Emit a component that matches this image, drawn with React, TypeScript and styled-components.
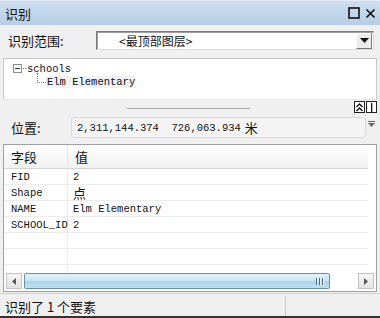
import React from "react";
import styled, { createGlobalStyle } from "styled-components";

const Global = createGlobalStyle`
  html, body { margin: 0; padding: 0; background: #f0f0f0; }
  body { font-family: "Noto Sans CJK SC", "Liberation Sans", sans-serif; }
  * { box-sizing: border-box; }
`;

const CJK = `"Noto Sans CJK SC", "Liberation Sans", sans-serif`;
const MONO = `"Liberation Mono", "Noto Sans CJK SC", monospace`;

const Window = styled.div`
  width: 380px;
  height: 318px;
  background: #f0f0f0;
  border-bottom: 2px solid #333;
  display: flex;
  flex-direction: column;
  overflow: hidden;
`;

const TitleBar = styled.div`
  height: 25px;
  flex: none;
  background: linear-gradient(#cfdff0, #b6cde6);
  border-top: 1px solid #e4edf7;
  display: flex;
  align-items: center;
  padding: 0 3px 0 5px;
  font-family: ${CJK};
  font-size: 13px;
  color: #111;
`;

const Title = styled.span`
  flex: 1;
`;

const TitleBtn = styled.span`
  width: 13px;
  height: 14px;
  display: inline-flex;
  align-items: center;
  justify-content: center;
  margin-left: 4px;
`;

const ScopeRow = styled.div`
  height: 31px;
  flex: none;
  display: flex;
  align-items: center;
  padding: 0 6px 0 8px;
`;

const Label = styled.span<{ $w?: number }>`
  font-family: ${CJK};
  font-size: 13px;
  color: #111;
  width: ${(p) => p.$w ?? 88}px;
  flex: none;
`;

const Select = styled.div`
  flex: 1;
  height: 19px;
  background: #fff;
  border: 1px solid #7a7a7a;
  border-right-color: #dcdcdc;
  border-bottom-color: #dcdcdc;
  box-shadow: inset 1px 1px 0 #a0a0a0;
  display: flex;
  align-items: center;
  font-family: ${CJK};
  font-size: 12px;
  color: #111;
`;

const SelectText = styled.span`
  flex: 1;
  padding-left: 22px;
`;

const SelectBtn = styled.span`
  width: 16px;
  height: 16px;
  margin-right: 1px;
  background: #ececec;
  border: 1px solid #fff;
  border-right-color: #777;
  border-bottom-color: #777;
  display: flex;
  align-items: center;
  justify-content: center;
`;

const TreePanel = styled.div`
  height: 42px;
  flex: none;
  margin: 2px 3px 0 3px;
  background: #fff;
  border: 1px solid #c8c8c8;
  border-bottom-color: #e8e8e8;
  padding: 3px 0 0 9px;
  font-family: ${MONO};
  font-size: 10.5px;
  color: #111;
`;

const TreeRow = styled.div<{ $indent?: number }>`
  height: 13px;
  display: flex;
  align-items: center;
  padding-left: ${(p) => p.$indent ?? 0}px;
`;

const Expander = styled.span`
  width: 9px;
  height: 9px;
  border: 1px solid #8c8c8c;
  display: inline-flex;
  align-items: center;
  justify-content: center;
  margin-right: 1px;
  &::after {
    content: "";
    width: 5px;
    height: 1px;
    background: #333;
  }
`;

const DotH = styled.span<{ $w: number }>`
  width: ${(p) => p.$w}px;
  border-top: 1px dotted #777;
  margin-right: 1px;
`;

const Elbow = styled.span`
  width: 9px;
  height: 10px;
  border-left: 1px dotted #777;
  border-bottom: 1px dotted #777;
  margin-top: -8px;
`;

const Selected = styled.span`
  background: #f2f2f2;
  padding: 0 1px;
`;

const SplitBar = styled.div`
  height: 14px;
  flex: none;
  display: flex;
  align-items: center;
  padding: 0 3px 0 127px;
`;

const SplitLine = styled.span`
  width: 123px;
  height: 1px;
  background: #a8a8a8;
  margin-top: 3px;
`;

const Spacer = styled.span`
  flex: 1;
`;

const SmallBtn = styled.span`
  width: 11px;
  height: 12px;
  border: 1px solid #222;
  background: #fff;
  display: inline-flex;
  align-items: center;
  justify-content: center;
  margin-left: 1px;
`;

const LocRow = styled.div`
  height: 27px;
  flex: none;
  display: flex;
  align-items: center;
  padding: 0 4px 0 11px;
`;

const LocField = styled.div`
  flex: 1;
  height: 21px;
  background: #f4f4f4;
  border: 1px solid #d8d8d8;
  border-radius: 3px;
  display: flex;
  align-items: center;
  padding-left: 5px;
  font-family: ${MONO};
  font-size: 10.5px;
  color: #111;
  white-space: pre;
`;

const Unit = styled.span`
  font-family: ${CJK};
  font-size: 13px;
  margin-left: 4px;
`;

const LocArrow = styled.span`
  width: 8px;
  margin-left: 2px;
  display: flex;
  align-self: flex-start;
  margin-top: 7px;
`;

const TablePanel = styled.div`
  flex: 1;
  min-height: 0;
  margin: 3px 3px 0 3px;
  background: #fff;
  border: 1px solid #a0a0a0;
  display: flex;
  flex-direction: column;
  overflow: hidden;
`;

const Grid = styled.div`
  flex: 1;
  min-height: 0;
  overflow: hidden;
  display: grid;
  grid-template-columns: 64px 1fr;
  grid-template-rows: 24px;
  grid-auto-rows: 16px;
  align-content: start;
  margin-right: 8px;
`;

const HeadCell = styled.div<{ $last?: boolean }>`
  height: 24px;
  background: linear-gradient(#ffffff, #f1f1f1);
  border-bottom: 1px solid #d5d5d5;
  border-right: ${(p) => (p.$last ? "none" : "1px solid #e4e4e4")};
  display: flex;
  align-items: center;
  padding-left: 7px;
  font-family: ${CJK};
  font-size: 13px;
  color: #111;
`;

const Cell = styled.div<{ $first?: boolean }>`
  height: 16px;
  border-bottom: 1px solid #ececec;
  border-right: ${(p) => (p.$first ? "1px solid #ececec" : "none")};
  display: flex;
  align-items: center;
  padding-left: ${(p) => (p.$first ? 7 : 5)}px;
  font-family: ${MONO};
  font-size: 10.5px;
  color: #111;
  white-space: nowrap;
`;

const CjkText = styled.span`
  font-family: ${CJK};
  font-size: 13px;
`;

const HScroll = styled.div`
  height: 16px;
  flex: none;
  margin: 0 2px 2px 2px;
  display: flex;
  align-items: center;
  gap: 2px;
`;

const ScrollBtn = styled.span`
  width: 16px;
  height: 16px;
  border: 1px solid #c4c4c4;
  background: linear-gradient(#f7f7f7, #e2e2e2);
  display: flex;
  align-items: center;
  justify-content: center;
`;

const Track = styled.div`
  flex: 1;
  height: 16px;
  display: flex;
  padding-right: 26px;
`;

const Thumb = styled.div`
  flex: 1;
  height: 16px;
  border: 1px solid #6a8ea8;
  border-radius: 2px;
  background: linear-gradient(#dff1f9 0%, #c7e6f3 50%, #a9d3e6 51%, #bfe0ee 100%);
  display: flex;
  align-items: center;
  justify-content: flex-end;
  padding-right: 5px;
`;

const Grip = styled.span`
  display: flex;
  gap: 1px;
  & > i {
    width: 1px;
    height: 7px;
    background: #4c6c84;
    box-shadow: 1px 0 0 #eaf6fb;
    margin-right: 1px;
  }
`;

const StatusBar = styled.div`
  height: 23px;
  flex: none;
  border-top: 1px solid #d0d0d0;
  display: flex;
  align-items: center;
  margin-top: 1px;
  padding-top: 2px;
  font-family: ${CJK};
  font-size: 13px;
  color: #111;
`;

const StatusText = styled.span`
  width: 286px;
  padding-left: 5px;
  height: 100%;
  display: flex;
  align-items: center;
  border-right: 1px solid #c8c8c8;
`;

const rows: [string, React.ReactNode][] = [
  ["FID", "2"],
  ["Shape", <CjkText key="s">点</CjkText>],
  ["NAME", "Elm Elementary"],
  ["SCHOOL_ID", "2"],
  ["", ""],
  ["", ""],
  ["", ""],
];

export default function App() {
  return (
    <>
      <Global />
      <Window>
        <TitleBar>
          <Title>识别</Title>
          <TitleBtn>
            <svg width="12" height="12" viewBox="0 0 12 12">
              <rect x="1" y="1" width="10" height="10" fill="none" stroke="#111" strokeWidth="1.6" />
            </svg>
          </TitleBtn>
          <TitleBtn>
            <svg width="11" height="11" viewBox="0 0 11 11">
              <path d="M1.5 1.5 L9.5 9.5 M9.5 1.5 L1.5 9.5" stroke="#111" strokeWidth="1.7" />
            </svg>
          </TitleBtn>
        </TitleBar>

        <ScopeRow>
          <Label>识别范围:</Label>
          <Select>
            <SelectText>&lt;最顶部图层&gt;</SelectText>
            <SelectBtn>
              <svg width="9" height="5" viewBox="0 0 9 5">
                <path d="M0 0 H9 L4.5 5 Z" fill="#111" />
              </svg>
            </SelectBtn>
          </Select>
        </ScopeRow>

        <TreePanel>
          <TreeRow>
            <Expander />
            <DotH $w={3} />
            schools
          </TreeRow>
          <TreeRow $indent={24}>
            <Elbow />
            <Selected>Elm Elementary</Selected>
          </TreeRow>
        </TreePanel>

        <SplitBar>
          <SplitLine />
          <Spacer />
          <SmallBtn>
            <svg width="7" height="9" viewBox="0 0 7 9">
              <path d="M0.5 4 L3.5 1 L6.5 4 M0.5 8 L3.5 5 L6.5 8" fill="none" stroke="#111" strokeWidth="1.4" />
            </svg>
          </SmallBtn>
          <SmallBtn>
            <svg width="3" height="9" viewBox="0 0 3 9">
              <rect x="1" y="0" width="1.3" height="9" fill="#111" />
            </svg>
          </SmallBtn>
        </SplitBar>

        <LocRow>
          <Label $w={60}>位置:</Label>
          <LocField>
            2,311,144.374  726,063.934<Unit>米</Unit>
          </LocField>
          <LocArrow>
            <svg width="7" height="6" viewBox="0 0 7 6">
              <rect x="0" y="0" width="7" height="1" fill="#666" />
              <path d="M0 2 H7 L3.5 6 Z" fill="#666" />
            </svg>
          </LocArrow>
        </LocRow>

        <TablePanel>
          <Grid>
            <HeadCell>字段</HeadCell>
            <HeadCell $last>值</HeadCell>
            {rows.map(([k, v], i) => (
              <React.Fragment key={i}>
                <Cell $first>{k}</Cell>
                <Cell>{v}</Cell>
              </React.Fragment>
            ))}
          </Grid>
          <HScroll>
            <ScrollBtn>
              <svg width="4" height="7" viewBox="0 0 4 7">
                <path d="M4 0 V7 L0 3.5 Z" fill="#555" />
              </svg>
            </ScrollBtn>
            <Track>
              <Thumb>
                <Grip>
                  <i />
                  <i />
                  <i />
                </Grip>
              </Thumb>
            </Track>
            <ScrollBtn>
              <svg width="4" height="7" viewBox="0 0 4 7">
                <path d="M0 0 V7 L4 3.5 Z" fill="#555" />
              </svg>
            </ScrollBtn>
          </HScroll>
        </TablePanel>

        <StatusBar>
          <StatusText>识别了 1 个要素</StatusText>
        </StatusBar>
      </Window>
    </>
  );
}
